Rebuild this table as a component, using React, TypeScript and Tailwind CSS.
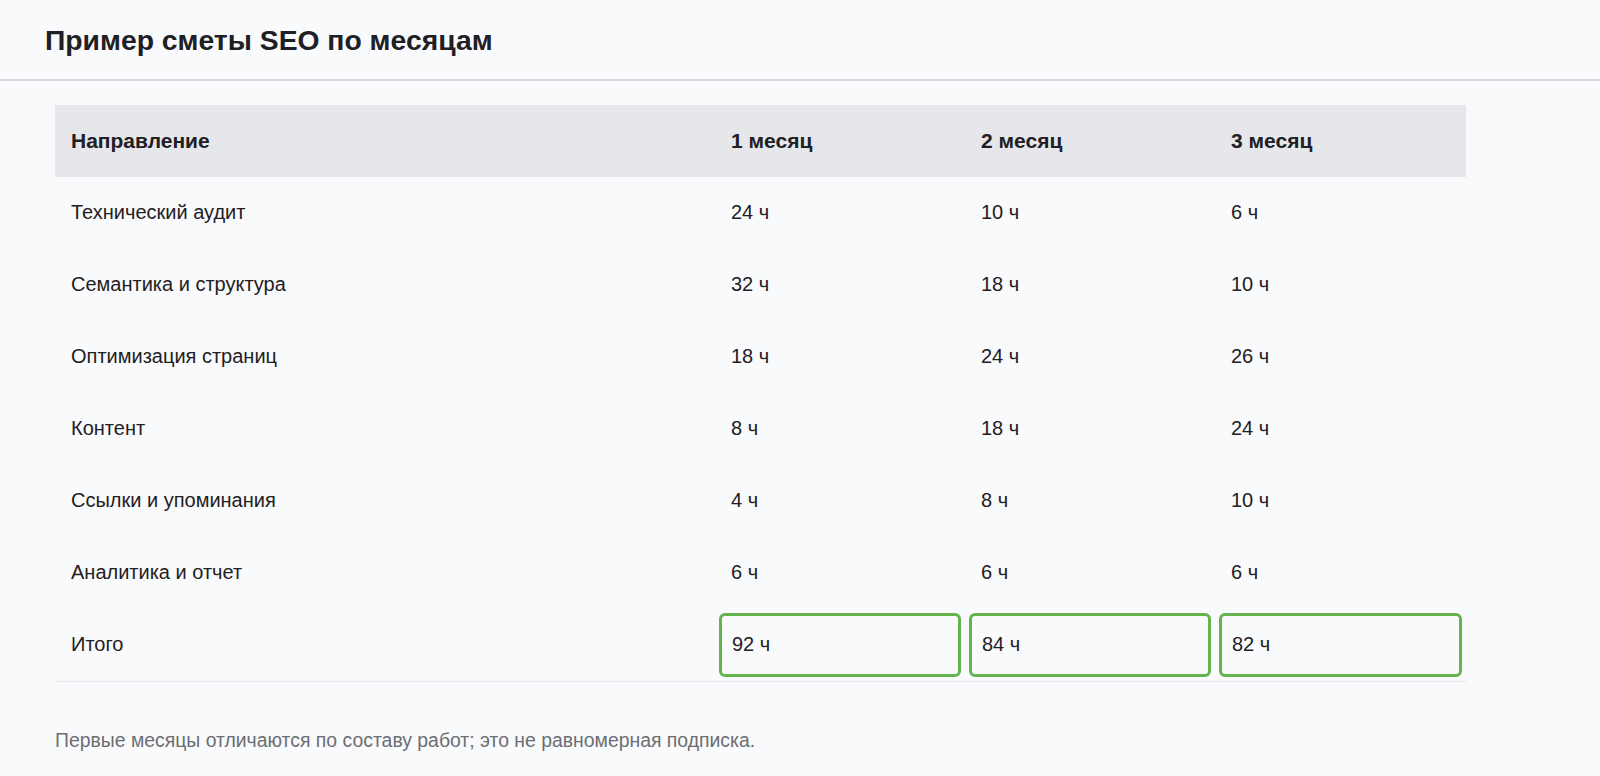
const rows = [
  ["Технический аудит", "24 ч", "10 ч", "6 ч"],
  ["Семантика и структура", "32 ч", "18 ч", "10 ч"],
  ["Оптимизация страниц", "18 ч", "24 ч", "26 ч"],
  ["Контент", "8 ч", "18 ч", "24 ч"],
  ["Ссылки и упоминания", "4 ч", "8 ч", "10 ч"],
  ["Аналитика и отчет", "6 ч", "6 ч", "6 ч"],
];

const totals = ["92 ч", "84 ч", "82 ч"];

export default function App() {
  return (
    <div
      className="min-h-screen bg-[#f9fafb] text-[#1f2023]"
      style={{ fontFamily: '"Liberation Sans", Arial, sans-serif' }}
    >
      <header className="h-[81px] border-b-2 border-[#d9dadd] pl-[45px] flex items-center">
        <h1 className="text-[28.3px] font-bold leading-none pt-[2px]">
          Пример сметы SEO по месяцам
        </h1>
      </header>

      <div className="pl-[55px] pt-[24px]">
        <table className="w-[1411px] border-collapse text-[20px] table-fixed">
          <colgroup>
            <col className="w-[660px]" />
            <col className="w-[250px]" />
            <col className="w-[250px]" />
            <col className="w-[251px]" />
          </colgroup>
          <thead>
            <tr className="bg-[#e5e7ea] h-[72px] text-[21px]">
              <th className="text-left font-bold px-4">Направление</th>
              <th className="text-left font-bold px-4">1 месяц</th>
              <th className="text-left font-bold px-4">2 месяц</th>
              <th className="text-left font-bold px-4">3 месяц</th>
            </tr>
          </thead>
          <tbody>
            {rows.map((r) => (
              <tr key={r[0]} className="h-[72px]">
                {r.map((c, i) => (
                  <td key={i} className="px-4 pb-[3px]">
                    {c}
                  </td>
                ))}
              </tr>
            ))}
            <tr className="h-[72px] border-b border-[#e5e7eb]">
              <td className="px-4 pb-[3px]">Итого</td>
              {totals.map((t) => (
                <td key={t} className="p-1">
                  <div className="h-16 border-[3px] border-[#64b34c] rounded-[6px] px-[10px] pb-[2px] flex items-center">
                    {t}
                  </div>
                </td>
              ))}
            </tr>
          </tbody>
        </table>

        <p className="mt-[44px] text-[19.4px] text-[#6b6e73]">
          Первые месяцы отличаются по составу работ; это не равномерная подписка.
        </p>
      </div>
    </div>
  );
}
